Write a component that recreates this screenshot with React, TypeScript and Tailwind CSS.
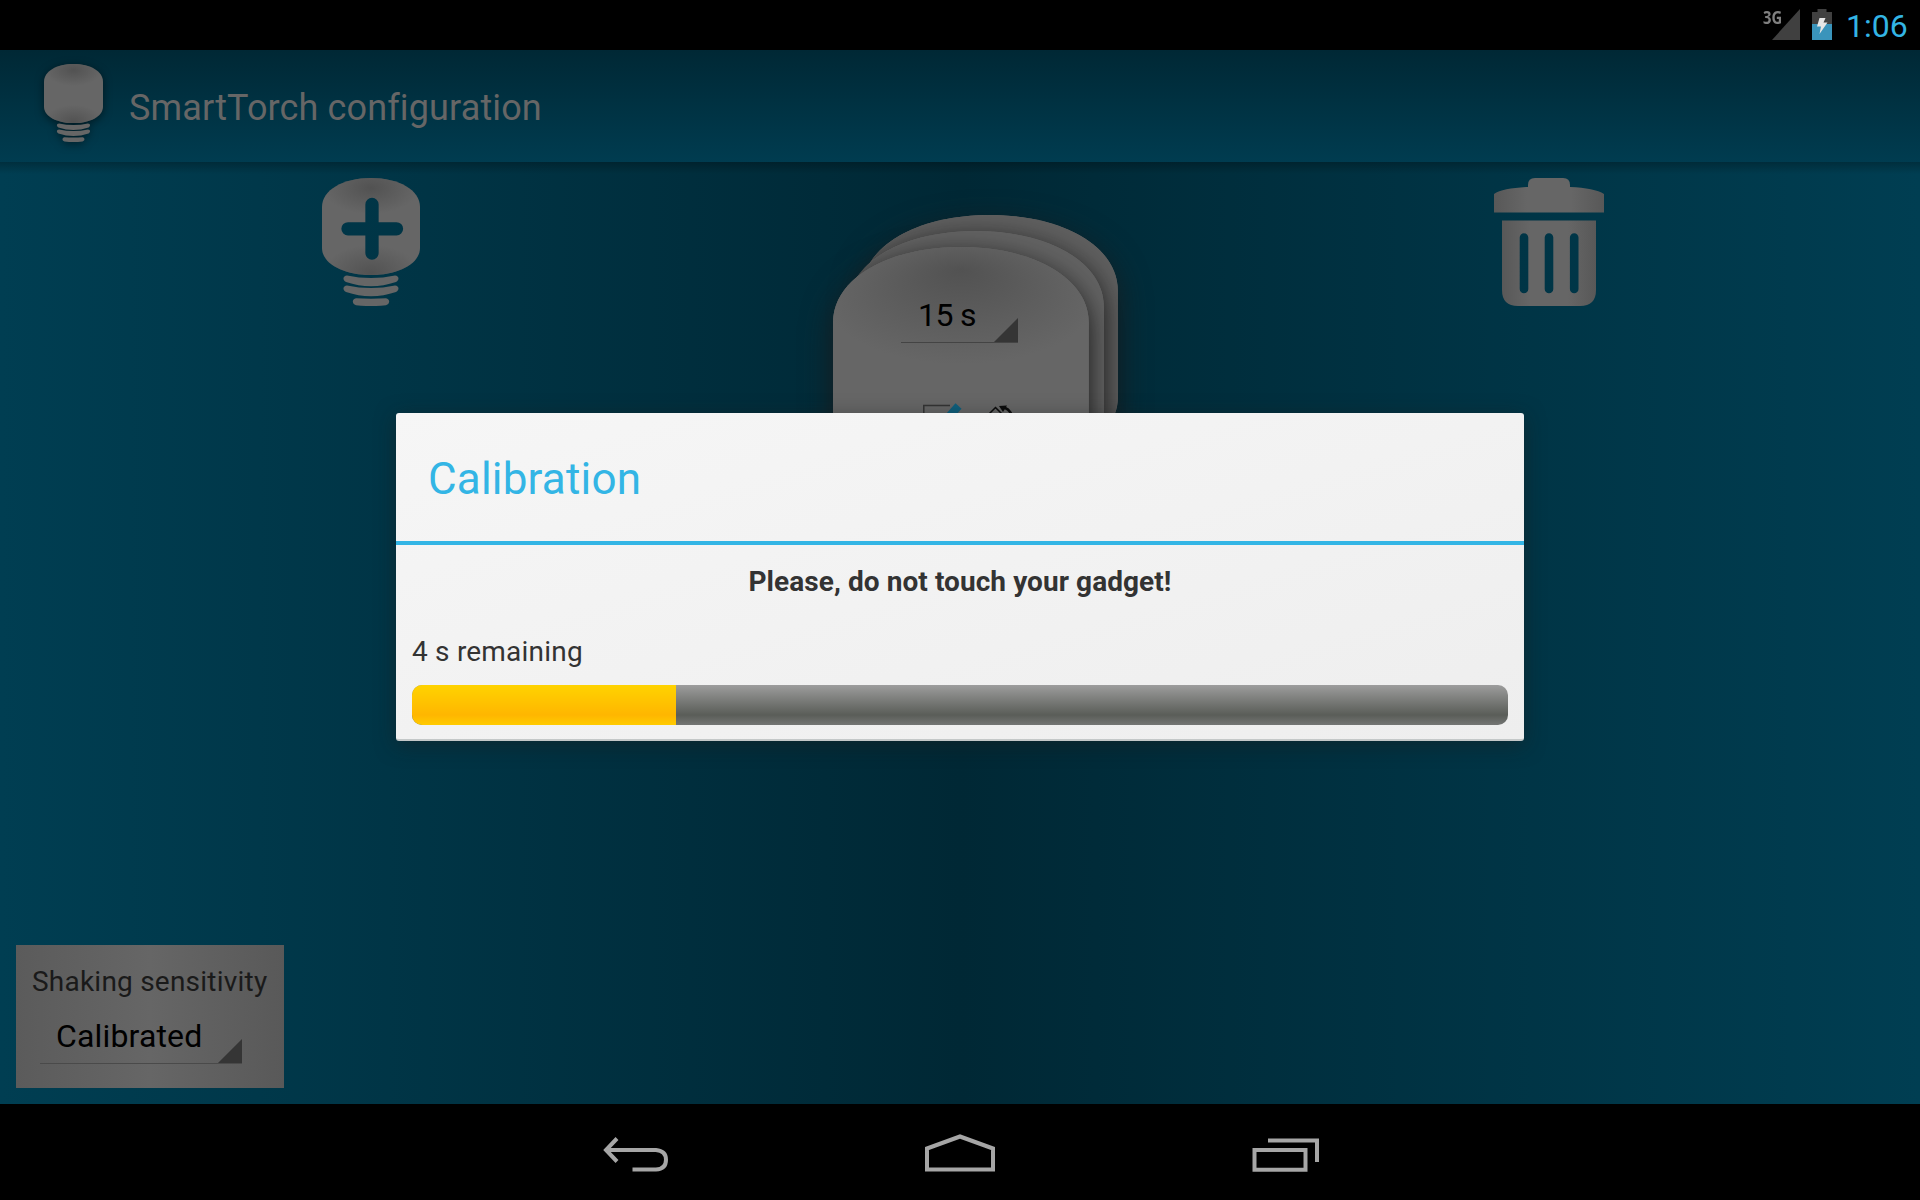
const BULB_BODY =
  "M0 29 C0 12 21 0 49 0 C77 0 98 12 98 29 V70 C98 86 76 97 49 97 C22 97 0 86 0 70 Z";

function BulbThreads() {
  return (
    <g fill="#666">
      <path d="M25 97.500 Q49 102.500 73 97.500 C77.500 98 77.500 102 74 104 Q49 112.500 24 104 C20.500 102 20.500 98 25 97.500 Z" />
      <path d="M25 107.500 Q49 112.500 73 107.500 C77.500 108 77.500 112 74 114 Q49 122.500 24 114 C20.500 112 20.500 108 25 107.500 Z" />
      <path d="M34 120.300 Q49 121 64 120.300 C68 120.800 68.500 126 64 127.200 Q49 129 34 127.200 C29.500 126 30 120.800 34 120.300 Z" />
    </g>
  );
}

function BulbShades({ id }: { id: string }) {
  return (
    <defs>
      <radialGradient id={`${id}-top`} gradientUnits="userSpaceOnUse" cx="0" cy="0" r="1" gradientTransform="translate(49 10) scale(48 26)">
        <stop offset="0" stopColor="#525252" />
        <stop offset="1" stopColor="#525252" stopOpacity="0" />
      </radialGradient>
      <radialGradient id={`${id}-low`} gradientUnits="userSpaceOnUse" cx="0" cy="0" r="1" gradientTransform="translate(49 95) scale(48 28)">
        <stop offset="0" stopColor="#525252" />
        <stop offset="1" stopColor="#525252" stopOpacity="0" />
      </radialGradient>
    </defs>
  );
}

function AppLogo() {
  return (
    <svg className="mb-[6px] ml-11 h-[78px] w-[59px] overflow-visible drop-shadow-[0_2px_4px_rgba(0,0,0,0.5)]" viewBox="0 0 98 128" preserveAspectRatio="none">
      <BulbShades id="logo" />
      <path d={BULB_BODY} fill="#666" />
      <path d={BULB_BODY} fill="url(#logo-top)" />
      <path d={BULB_BODY} fill="url(#logo-low)" />
      <BulbThreads />
    </svg>
  );
}

function AddBulbIcon() {
  return (
    <svg className="h-32 w-[98px]" viewBox="0 0 98 128">
      <BulbShades id="add" />
      <mask id="plus-cut">
        <rect width="98" height="128" fill="#fff" />
        <path d="M50 26.500 V75 M26 50.800 H74.500" stroke="#000" strokeWidth="13.300" strokeLinecap="round" />
      </mask>
      <g mask="url(#plus-cut)">
        <path d={BULB_BODY} fill="#666" />
        <path d={BULB_BODY} fill="url(#add-top)" />
        <path d={BULB_BODY} fill="url(#add-low)" />
      </g>
      <BulbThreads />
    </svg>
  );
}

function TrashIcon() {
  return (
    <svg className="h-32 w-[110px]" viewBox="0 0 110 128">
      <defs>
        <linearGradient id="trash-shade" x1="0" x2="1" y1="0" y2="0">
          <stop offset="0" stopColor="#585858" />
          <stop offset="0.3" stopColor="#666" />
          <stop offset="0.7" stopColor="#666" />
          <stop offset="1" stopColor="#585858" />
        </linearGradient>
        <mask id="slots">
          <rect width="110" height="128" fill="#fff" />
          <path d="M30 59.500 V111 M55 59.500 V111 M80.200 59.500 V111" stroke="#000" strokeWidth="8.600" strokeLinecap="round" />
        </mask>
      </defs>
      <path d="M0 34.500 V16 C6 12 18 9.800 34 9 V7 Q34 0 41 0 H69 Q76 0 76 7 V9 C92 9.800 104 12 110 16 V34.500 Z" fill="url(#trash-shade)" />
      <path mask="url(#slots)" d="M8 42.500 H102 V112 Q102 128 86 128 H24 Q8 128 8 112 Z" fill="url(#trash-shade)" />
    </svg>
  );
}

function CardStack() {
  return (
    <svg className="absolute inset-0 h-full w-full overflow-visible" viewBox="0 0 285 285">
      <defs>
        <filter id="stack-shadow" x="-40%" y="-40%" width="180%" height="180%" colorInterpolationFilters="sRGB">
          <feDropShadow dx="0" dy="4" stdDeviation="6" floodColor="#1c1a1a" floodOpacity="0.85" />
        </filter>
        <filter id="card-shadow" x="-40%" y="-40%" width="180%" height="180%" colorInterpolationFilters="sRGB">
          <feDropShadow dx="0" dy="3" stdDeviation="5" floodColor="#0c0c0c" floodOpacity="0.9" />
        </filter>
        <radialGradient id="card-shade" gradientUnits="userSpaceOnUse" cx="0" cy="0" r="1" fx="0" fy="-0.45" gradientTransform="translate(49 20) scale(52 25)">
          <stop offset="0" stopColor="#525252" />
          <stop offset="1" stopColor="#525252" stopOpacity="0" />
        </radialGradient>
        <clipPath id="clip-back"><path transform="translate(29 0) scale(2.61)" d={BULB_BODY} /></clipPath>
        <clipPath id="clip-mid"><path transform="translate(15 16) scale(2.61)" d={BULB_BODY} /></clipPath>
      </defs>
      <path filter="url(#stack-shadow)" transform="translate(29 0) scale(2.61)" d={BULB_BODY} fill="#666" />
      <path filter="url(#stack-shadow)" transform="translate(0 32) scale(2.61)" d={BULB_BODY} fill="#666" />
      <path transform="translate(29 0) scale(2.61)" d={BULB_BODY} fill="#5f5f5f" />
      <g clipPath="url(#clip-back)">
        <path filter="url(#card-shadow)" transform="translate(15 16) scale(2.61)" d={BULB_BODY} fill="#666" />
      </g>
      <path transform="translate(15 16) scale(2.61)" d={BULB_BODY} fill="#626262" />
      <g clipPath="url(#clip-mid)">
        <path filter="url(#card-shadow)" transform="translate(0 32) scale(2.61)" d={BULB_BODY} fill="#666" />
      </g>
      <g transform="translate(0 32) scale(2.61)">
        <path d={BULB_BODY} fill="#666" />
        <path d={BULB_BODY} fill="url(#card-shade)" />
      </g>
    </svg>
  );
}

function SpinnerCorner() {
  return (
    <svg className="h-6 w-6" viewBox="0 0 24 24">
      <path d="M0 24 L24 0 V24 Z" fill="#353535" />
    </svg>
  );
}

function CardOptions() {
  return (
    <svg className="mt-[60px] ml-[90px] h-9 w-[92px]" viewBox="0 0 92 36">
      <path d="M27 2.500 H.8 V36" fill="none" stroke="#333" strokeWidth="1.500" />
      <path d="M35.500 3 L16 25" stroke="#0e5f7d" strokeWidth="8" />
      <path d="M64 13 L72.500 4.500 L82 14" fill="none" stroke="#0a0a0a" strokeWidth="1.500" />
      <path d="M78 4.500 Q86 4 89 13" fill="none" stroke="#0a0a0a" strokeWidth="2.500" />
      <path d="M76 3 L84 2.500 L80 9 Z" fill="#0a0a0a" />
    </svg>
  );
}

function StatusBar() {
  return (
    <header className="flex h-[50px] shrink-0 items-start justify-end bg-black">
      <span className="mt-[7px] w-[19px] font-['Open_Sans'] text-[18px] leading-5 font-bold text-[#808080]">
        <span className="inline-block origin-left scale-x-[0.82]">3G</span>
      </span>
      <svg className="mt-[9px] -ml-[10px] h-[31px] w-7" viewBox="0 0 28 31">
        <path d="M0 31 L28 0 V31 Z" fill="#404040" />
      </svg>
      <svg className="mt-[9px] ml-3 h-[31px] w-5" viewBox="0 0 20 31">
        <path d="M0 3 H5.500 V0 H14.500 V3 H20 V15 H0 Z" fill="#404040" />
        <path d="M0 15 H20 V31 H0 Z" fill="#3a94bb" />
        <path d="M7.500 9 H13.500 L11.500 13.500 H15.500 L7.500 25 L9 17.500 H5 Z" fill="#e6e6e6" />
      </svg>
      <span className="mt-[7px] ml-[14px] w-[74px] text-[32px] leading-[38px] text-[#33b5e5]">1:06</span>
    </header>
  );
}

function ActionBar() {
  return (
    <div className="flex h-28 shrink-0 items-center bg-linear-to-b from-[#002835] to-[#003c50]">
      <AppLogo />
      <h1 className="mt-[3px] ml-[26px] text-[36px] leading-[42px] tracking-[0.13px] whitespace-nowrap text-[#666]">SmartTorch configuration</h1>
    </div>
  );
}

function SensitivityPanel() {
  return (
    <section className="mb-4 ml-4 flex h-[143px] w-[268px] flex-col bg-linear-to-r from-[#5b5b5b] via-[#666] to-[#595959]">
      <p className="mt-[21px] ml-4 text-[28px] leading-8 tracking-[0.22px] whitespace-nowrap text-[#1a1a1a]">Shaking sensitivity</p>
      <div className="mt-[18px] ml-6 flex h-12 w-[202px] items-end justify-between border-b border-[#4a4a4a]">
        <span className="mb-[8px] ml-4 text-[32px] leading-[38px] tracking-[0.15px] text-black">Calibrated</span>
        <SpinnerCorner />
      </div>
    </section>
  );
}

function CalibrationDialog() {
  return (
    <div className="absolute top-[413px] left-[396px] flex h-[328px] w-[1128px] flex-col rounded-[3px] border-b-2 border-[#c4c8c8] bg-linear-to-br from-[#f6f6f6] to-[#eeeeee] shadow-[0_4px_20px_rgba(26,30,30,0.5)]">
      <div className="h-32 pt-10 pl-8">
        <h2 className="text-[44px] leading-[52px] tracking-[0.18px] text-[#33b5e5]">Calibration</h2>
      </div>
      <div className="h-1 bg-[#33b5e5]" />
      <p className="mt-[21px] text-center text-[28px] leading-8 font-bold tracking-[0.07px] text-[#333]">Please, do not touch your gadget!</p>
      <p className="mt-[38px] ml-4 text-[28px] leading-8 tracking-[0.2px] text-[#333]">4 s remaining</p>
      <div className="mx-4 mt-[17px] h-10 overflow-hidden rounded-[10px] bg-linear-to-b from-[#9d9d9d] via-[#5a5d58] via-75% to-[#747674]">
        <div className="h-full w-[264px] bg-linear-to-b from-[#ffd300] via-[#ffb600] via-75% to-[#ffcb00]" />
      </div>
    </div>
  );
}

function NavigationBar() {
  return (
    <footer className="flex h-24 shrink-0 items-start bg-black">
      <svg className="mt-[30px] ml-[600px] h-12 w-[72px]" viewBox="0 0 72 48" fill="none" stroke="#a6a6a6" strokeWidth="4">
        <path d="M17 4.500 L6 16 L17 27.500" />
        <path d="M7 16 H56 Q66 17 66 25.700 Q66 35 56 35.500 H32.500" />
      </svg>
      <svg className="mt-[26px] ml-[248px] h-12 w-20" viewBox="0 0 80 48" fill="none" stroke="#a6a6a6" strokeWidth="4">
        <path d="M7 39.500 V18.500 L40 6.500 L73 18.500 V39.500 Z" />
      </svg>
      <svg className="mt-[30px] ml-[248px] h-12 w-20" viewBox="0 0 80 48" fill="none" stroke="#a6a6a6" strokeWidth="4">
        <path d="M6.500 16 H57.500 V35.800 H6.500 Z" />
        <path d="M20 6.500 H69 V28" />
      </svg>
    </footer>
  );
}

export default function App() {
  return (
    <div className="relative flex h-[1200px] w-[1920px] flex-col overflow-hidden font-['Roboto',sans-serif]">
      <StatusBar />
      <ActionBar />
      <main className="flex min-h-0 flex-1 flex-col bg-linear-to-r from-[#003e52] via-[#002835] to-[#003e52]">
        <div className="h-3 shrink-0 bg-linear-to-b from-black/25 to-transparent" />
        <div className="flex flex-1 items-start">
          <div className="mt-1 ml-[322px]">
            <AddBulbIcon />
          </div>
          <div className="relative mt-[41px] ml-[413px] h-[285px] w-[285px]">
            <CardStack />
            <div className="relative flex flex-col items-start">
              <div className="mt-[79px] ml-[68px] flex h-[49px] w-[117px] items-end justify-between border-b border-[#444]">
                <span className="mb-[8px] ml-[17px] text-[32px] leading-[38px] tracking-[-0.6px] whitespace-nowrap text-black">15 s</span>
                <SpinnerCorner />
              </div>
              <CardOptions />
            </div>
          </div>
          <div className="mt-1 ml-[376px]">
            <TrashIcon />
          </div>
        </div>
        <SensitivityPanel />
      </main>
      <NavigationBar />
      <CalibrationDialog />
    </div>
  );
}
